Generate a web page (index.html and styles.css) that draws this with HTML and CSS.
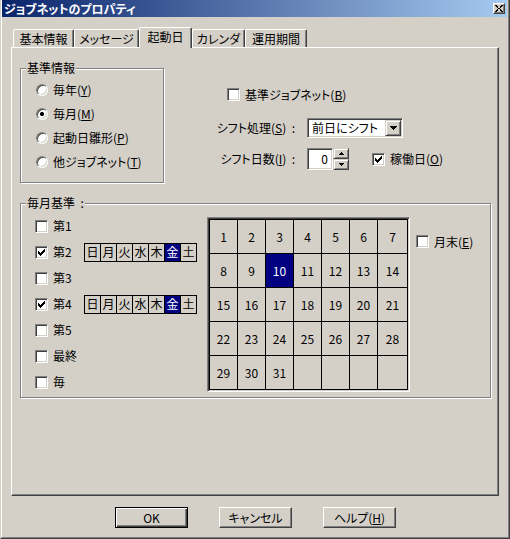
FILE: index.html
```html
<!DOCTYPE html>
<html lang="ja">
<head>
<meta charset="utf-8">
<title>ジョブネットのプロパティ</title>
<link rel="stylesheet" href="styles.css">
</head>
<body>
<div class="window">
  <div class="frame">
    <div class="titlebar">
      <span class="title">ジョブネットのプロパティ</span>
      <span class="close"><svg width="8" height="7" viewBox="0 0 8 7" shape-rendering="crispEdges"><path d="M0 0h2v1H0zM1 1h2v1H1zM2 2h1v1H2zM3 3h2v1H3zM2 4h1v1H2zM1 5h2v1H1zM0 6h2v1H0zM6 0h2v1H6zM5 1h2v1H5zM5 2h1v1H5zM5 4h1v1H5zM5 5h2v1H5zM6 6h2v1H6z" fill="#000"/></svg></span>
    </div>
    <div class="tabs">
      <div class="tab t1">基本情報</div>
      <div class="tab t2">メッセージ</div>
      <div class="tab t3 active">起動日</div>
      <div class="tab t4">カレンダ</div>
      <div class="tab t5">運用期間</div>
    </div>
    <div class="panel">
      <div class="top">
        <fieldset class="group g1">
          <legend>基準情報</legend>
          <div class="g1body">
            <div class="radrow"><span class="radio"></span>毎年(<u>Y</u>)</div>
            <div class="radrow"><span class="radio on"></span>毎月(<u>M</u>)</div>
            <div class="radrow"><span class="radio"></span>起動日雛形(<u>P</u>)</div>
            <div class="radrow"><span class="radio"></span>他ジョブネット(<u>T</u>)</div>
          </div>
        </fieldset>
        <div class="opts">
          <div class="chkrow base"><span class="chk"></span>基準ジョブネット(<u>B</u>)</div>
          <div class="frow shift">
            <span class="lbl">シフト処理(<u>S</u>)&nbsp;&nbsp;:</span>
            <div class="combo"><span class="ctext">前日にシフト</span><span class="dropbtn"><svg width="7" height="4" viewBox="0 0 7 4" shape-rendering="crispEdges"><path d="M0 0h7v1H0zM1 1h5v1H1zM2 2h3v1H2zM3 3h1v1H3z" fill="#000"/></svg></span></div>
          </div>
          <div class="frow days">
            <span class="lbl">シフト日数(<u>I</u>)&nbsp;&nbsp;:</span>
            <div class="edit">0</div>
            <div class="spin">
              <span class="sb"><svg width="5" height="3" viewBox="0 0 5 3" shape-rendering="crispEdges"><path d="M2 0h1v1H2zM1 1h3v1H1zM0 2h5v1H0z" fill="#000"/></svg></span>
              <span class="sb"><svg width="5" height="3" viewBox="0 0 5 3" shape-rendering="crispEdges"><path d="M0 0h5v1H0zM1 1h3v1H1zM2 2h1v1H2z" fill="#000"/></svg></span>
            </div>
            <div class="chkrow work"><span class="chk"><svg width="11" height="11" viewBox="0 0 11 11" shape-rendering="crispEdges"><path d="M2 4h1v3H2zM3 5h1v3H3zM4 6h1v3H4zM5 5h1v3H5zM6 4h1v3H6zM7 3h1v3H7zM8 2h1v3H8z" fill="#000"/></svg></span>稼働日(<u>O</u>)</div>
          </div>
        </div>
      </div>

      <fieldset class="group g2">
        <legend>毎月基準&nbsp;&nbsp;:</legend>
        <div class="monthly">
          <div class="weeks">
            <div class="crow"><span class="chk"></span>第1</div>
            <div class="crow"><span class="chk"><svg width="11" height="11" viewBox="0 0 11 11" shape-rendering="crispEdges"><path d="M2 4h1v3H2zM3 5h1v3H3zM4 6h1v3H4zM5 5h1v3H5zM6 4h1v3H6zM7 3h1v3H7zM8 2h1v3H8z" fill="#000"/></svg></span><span class="lab">第2</span>
              <div class="strip"><span>日</span><span>月</span><span>火</span><span>水</span><span>木</span><span class="sel">金</span><span>土</span></div>
            </div>
            <div class="crow"><span class="chk"></span>第3</div>
            <div class="crow"><span class="chk"><svg width="11" height="11" viewBox="0 0 11 11" shape-rendering="crispEdges"><path d="M2 4h1v3H2zM3 5h1v3H3zM4 6h1v3H4zM5 5h1v3H5zM6 4h1v3H6zM7 3h1v3H7zM8 2h1v3H8z" fill="#000"/></svg></span><span class="lab">第4</span>
              <div class="strip"><span>日</span><span>月</span><span>火</span><span>水</span><span>木</span><span class="sel">金</span><span>土</span></div>
            </div>
            <div class="crow"><span class="chk"></span>第5</div>
            <div class="crow"><span class="chk"></span>最終</div>
            <div class="crow"><span class="chk"></span>毎</div>
          </div>
          <div class="calframe">
            <div class="cal">
              <span>1</span><span>2</span><span>3</span><span>4</span><span>5</span><span>6</span><span>7</span>
              <span>8</span><span>9</span><span class="sel">10</span><span>11</span><span>12</span><span>13</span><span>14</span>
              <span>15</span><span>16</span><span>17</span><span>18</span><span>19</span><span>20</span><span>21</span>
              <span>22</span><span>23</span><span>24</span><span>25</span><span>26</span><span>27</span><span>28</span>
              <span>29</span><span>30</span><span>31</span><span></span><span></span><span></span><span></span>
            </div>
          </div>
          <div class="chkrow eom"><span class="chk"></span>月末(<u>E</u>)</div>
        </div>
      </fieldset>
    </div>
    <div class="buttons">
      <div class="btn def">OK</div>
      <div class="btn">キャンセル</div>
      <div class="btn">ヘルプ(<u>H</u>)</div>
    </div>
  </div>
</div>
</body>
</html>
```
FILE: styles.css
```css
* { box-sizing: border-box; }
html, body { margin: 0; padding: 0; }
body {
  width: 510px;
  height: 539px;
  overflow: hidden;
  background: #D4D0C8;
  font-family: "Noto Sans CJK JP", "Noto Sans", sans-serif;
  font-size: 12px;
  line-height: 12px;
  font-feature-settings: "palt" 1;
  color: #000;
}
u { text-decoration: underline; text-underline-offset: 1px; }

.window {
  width: 510px;
  height: 539px;
  border-left: 1px solid #D4D0C8;
  border-right: 1px solid #404040;
  border-bottom: 1px solid #404040;
}
.frame {
  height: 100%;
  border-left: 1px solid #fff;
  border-right: 1px solid #808080;
  border-bottom: 1px solid #808080;
}

/* title bar */
.titlebar {
  height: 17px;
  margin-right: 1px;
  background: linear-gradient(to right, #0A246A, #A6CAF0);
  display: flex;
  align-items: center;
  justify-content: space-between;
  padding: 0 2px 0 2px;
}
.title { color: #fff; font-weight: bold; }
.close {
  width: 12px;
  height: 11px;
  background: #D4D0C8;
  border: 1px solid;
  border-color: #fff #404040 #404040 #fff;
  box-shadow: inset -1px -1px 0 #808080;
  display: flex;
  align-items: center;
  justify-content: center;
}
.close svg { display: block; }

/* tabs */
.tabs {
  display: flex;
  align-items: flex-end;
  height: 20px;
  margin: 10px 0 0 11px;
}
.tab {
  height: 18px;
  display: flex;
  align-items: center;
  justify-content: center;
  border-top: 1px solid #fff;
  border-left: 1px solid #fff;
  border-right: 1px solid #404040;
  box-shadow: inset -1px 0 0 #808080;
  border-radius: 2px 2px 0 0;
  white-space: nowrap;
}
.t1 { width: 61px; }
.t2 { width: 65px; }
.t3 { width: 53px; }
.t4 { width: 53px; }
.t5 { width: 62px; }
.tab.active {
  height: 21px;
  margin-bottom: -1px;
  position: relative;
  z-index: 1;
  background: #D4D0C8;
  padding-bottom: 2px;
}

/* panel */
.panel {
  margin-left: 9px;
  width: 488px;
  height: 449px;
  border-top: 1px solid #fff;
  border-left: 1px solid #fff;
  border-right: 1px solid #404040;
  border-bottom: 1px solid #404040;
  box-shadow: inset -1px -1px 0 #808080;
  padding: 14px 0 0 8px;
}

.top { display: flex; align-items: flex-start; }

fieldset.group {
  margin: 0;
  padding: 0;
  border: 1px solid #808080;
  box-shadow: 1px 1px 0 #fff, inset 1px 1px 0 #fff;
  min-inline-size: 0;
}
legend {
  margin-left: 5px;
  padding: 0 1px;
  height: 12px;
  line-height: 12px;
  background: #D4D0C8;
  white-space: nowrap;
}

fieldset.g1 { width: 144px; }
.g1body { padding: 4px 0 8px 15px; }
.radrow {
  display: flex;
  align-items: center;
  height: 24px;
  white-space: nowrap;
}
.radio {
  flex: none;
  width: 12px;
  height: 12px;
  border-radius: 50%;
  border: 1px solid;
  border-color: #808080 #fff #fff #808080;
  background: #fff;
  box-shadow: inset 1px 1px 0 #404040, inset -1px -1px 0 #D4D0C8;
  margin-right: 5px;
}
.radio.on {
  background: radial-gradient(circle at center, #000 0, #000 2px, #fff 2.2px);
}

.chk {
  flex: none;
  width: 13px;
  height: 13px;
  border: 1px solid;
  border-color: #808080 #fff #fff #808080;
  background: #fff;
  box-shadow: inset 1px 1px 0 #404040, inset -1px -1px 0 #D4D0C8;
  margin-right: 5px;
}
.chk svg { display: block; }

/* right options */
.opts { padding-top: 26px; }
.chkrow {
  display: flex;
  align-items: center;
  height: 13px;
  white-space: nowrap;
}
.base { margin-left: 63px; }
.frow { display: flex; align-items: center; }
.shift { margin-top: 17px; height: 20px; }
.days { margin-top: 10px; height: 22px; }
.lbl {
  width: 131px;
  margin-right: 12px;
  text-align: right;
  white-space: nowrap;
}
.combo {
  width: 96px;
  height: 20px;
  border: 1px solid;
  border-color: #808080 #fff #fff #808080;
  box-shadow: inset 1px 1px 0 #404040, inset -1px -1px 0 #D4D0C8;
  background: #fff;
  padding: 1px;
  display: flex;
  align-items: center;
  justify-content: space-between;
}
.ctext { margin-left: 3px; white-space: nowrap; }
.dropbtn, .sb {
  background: #D4D0C8;
  border: 1px solid;
  border-color: #D4D0C8 #404040 #404040 #D4D0C8;
  box-shadow: inset 1px 1px 0 #fff, inset -1px -1px 0 #808080;
  display: flex;
  align-items: center;
  justify-content: center;
}
.dropbtn { width: 16px; height: 16px; flex: none; }
.dropbtn svg, .sb svg { display: block; }
.edit {
  width: 26px;
  height: 22px;
  border: 1px solid;
  border-color: #808080 #fff #fff #808080;
  box-shadow: inset 1px 1px 0 #404040, inset -1px -1px 0 #D4D0C8;
  background: #fff;
  display: flex;
  align-items: center;
  justify-content: flex-end;
  padding-right: 4px;
}
.spin {
  width: 16px;
  height: 22px;
  display: flex;
  flex-direction: column;
}
.sb { width: 16px; height: 11px; }
.work { margin-left: 23px; }

/* monthly group */
fieldset.g2 { width: 471px; margin-top: 14px; }
.monthly {
  display: flex;
  align-items: flex-start;
  padding: 4px 0 2px 0;
}
.weeks { width: 186px; padding-left: 14px; }
.crow {
  display: flex;
  align-items: center;
  height: 26px;
  white-space: nowrap;
}
.lab { width: 31px; }
.strip {
  display: grid;
  grid-template-columns: repeat(7, 15px);
  grid-template-rows: 17px;
  gap: 1px;
  background: #000;
  border: 1px solid #000;
}
.strip span {
  background: #D4D0C8;
  display: flex;
  align-items: center;
  justify-content: center;
}
.strip .sel { background: #000080; color: #fff; }

.calframe {
  margin-top: 4px;
  border: 1px solid;
  border-color: #808080 #fff #fff #808080;
  box-shadow: inset 1px 1px 0 #404040, inset -1px -1px 0 #D4D0C8;
  padding: 1px;
}
.cal {
  display: grid;
  grid-template-columns: repeat(6, 27px) 29px;
  grid-template-rows: repeat(5, 33px);
  gap: 1px;
  background: #000;
  border: 1px solid #000;
}
.cal span {
  background: #D4D0C8;
  display: flex;
  align-items: center;
  justify-content: center;
}
.cal .sel { background: #000080; color: #fff; }
.eom { margin-left: 6px; margin-top: 22px; }

/* buttons */
.buttons {
  display: flex;
  gap: 31px;
  margin: 11px 0 0 113px;
}
.btn {
  width: 73px;
  height: 21px;
  display: flex;
  align-items: center;
  justify-content: center;
  border: 1px solid;
  border-color: #fff #404040 #404040 #fff;
  box-shadow: inset -1px -1px 0 #808080;
  white-space: nowrap;
}
.btn.def {
  border-color: #000;
  box-shadow: inset 1px 1px 0 #fff, inset -1px -1px 0 #404040, inset -2px -2px 0 #808080;
}
```
